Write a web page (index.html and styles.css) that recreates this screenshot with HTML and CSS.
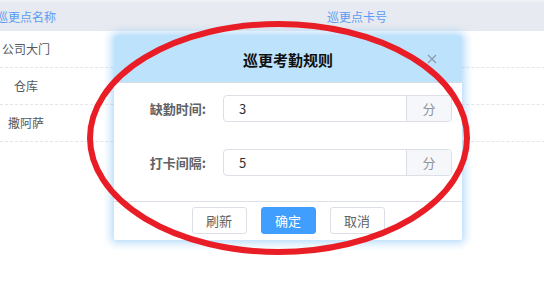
FILE: index.html
```html
<!DOCTYPE html>
<html lang="zh">
<head>
<meta charset="utf-8">
<link rel="stylesheet" href="styles.css">
</head>
<body>
<div class="page">
  <div class="table">
    <div class="thead">
      <div class="cell c1">巡更点名称</div>
      <div class="cell c2">巡更点卡号</div>
    </div>
    <div class="row"><div class="cell c1">公司大门</div><div class="cell c2"></div></div>
    <div class="row"><div class="cell c1">仓库</div><div class="cell c2"></div></div>
    <div class="row"><div class="cell c1">撒阿萨</div><div class="cell c2"></div></div>
  </div>

  <div class="dialog">
    <div class="dlg-head">
      <span class="dlg-title">巡更考勤规则</span>
      <svg class="dlg-close" width="10" height="10" viewBox="0 0 10 10"><path d="M1 1L9 9M9 1L1 9" stroke="#8c9aa8" stroke-width="1.2" fill="none"/></svg>
    </div>
    <div class="dlg-body">
      <div class="form-row">
        <label class="label">缺勤时间:</label>
        <div class="input-group">
          <div class="input">3</div>
          <div class="append">分</div>
        </div>
      </div>
      <div class="form-row">
        <label class="label">打卡间隔:</label>
        <div class="input-group">
          <div class="input">5</div>
          <div class="append">分</div>
        </div>
      </div>
    </div>
    <div class="dlg-foot">
      <button class="btn">刷新</button>
      <button class="btn primary">确定</button>
      <button class="btn">取消</button>
    </div>
  </div>

  <svg class="annot" width="544" height="307" viewBox="0 0 544 307">
    <ellipse cx="278.5" cy="138" rx="188.5" ry="114" fill="none" stroke="#e81d25" stroke-width="6"/>
  </svg>
</div>
</body>
</html>
```
FILE: styles.css
```css
html, body {
  margin: 0;
  padding: 0;
  background: #fff;
}
body {
  font-family: "Noto Sans CJK SC", "Noto Sans", sans-serif;
  width: 544px;
  height: 307px;
  overflow: hidden;
}
.page {
  position: relative;
  width: 544px;
  height: 307px;
  overflow: hidden;
}
.table {
  width: 700px;
}
.thead, .row {
  display: grid;
  grid-template-columns: 52px 610px;
}
.thead {
  height: 31px;
  background: #e7eaf0;
  border-top: 2px solid #eef0f4;
  box-sizing: border-box;
  color: #5a9cf4;
}
.row {
  height: 37px;
  box-sizing: border-box;
  border-bottom: 1px dashed #e3e5e8;
  color: #555a60;
}
.cell {
  display: flex;
  align-items: center;
  justify-content: center;
  font-size: 12px;
  white-space: nowrap;
  overflow: visible;
}
.row .cell {
  padding-bottom: 2px;
}
.dialog {
  position: absolute;
  left: 114px;
  top: 35px;
  width: 348px;
  height: 205px;
  background: #fff;
  border-radius: 4px 4px 2px 2px;
  box-shadow: 0 0 9px 3px rgba(120, 190, 248, 0.55);
  display: flex;
  flex-direction: column;
}
.dlg-head {
  position: relative;
  height: 47px;
  background: #bde2fb;
  border-radius: 4px 4px 0 0;
  border-bottom: 1px solid #d9dde3;
  display: flex;
  align-items: center;
  justify-content: center;
}
.dlg-title {
  font-size: 15px;
  font-weight: bold;
  color: #111;
  padding-top: 1px;
}
.dlg-close {
  position: absolute;
  right: 25px;
  top: 19px;
}
.dlg-body {
  padding: 12px 10px 0 0;
  height: 106px;
  box-sizing: border-box;
  display: flex;
  flex-direction: column;
  gap: 27px;
}
.form-row {
  display: flex;
  align-items: center;
  height: 27px;
}
.label {
  width: 92px;
  margin-right: 17px;
  text-align: right;
  font-size: 13px;
  font-weight: bold;
  color: #606266;
}
.input-group {
  flex: 1;
  display: flex;
  height: 27px;
  box-sizing: border-box;
  border: 1px solid #dcdfe6;
  border-radius: 4px;
  overflow: hidden;
}
.input {
  flex: 1;
  display: flex;
  align-items: center;
  padding-left: 15px;
  font-size: 13px;
  color: #303133;
}
.append {
  width: 44px;
  background: #f5f7fa;
  border-left: 1px solid #dcdfe6;
  display: flex;
  align-items: center;
  justify-content: center;
  font-size: 13px;
  color: #909399;
}
.dlg-foot {
  margin-top: 12px;
  border-top: 1px solid #dcdfe6;
  padding-top: 5px;
  display: flex;
  justify-content: center;
  gap: 14px;
}
.btn {
  width: 55px;
  height: 27px;
  padding: 0;
  border: 1px solid #dcdfe6;
  border-radius: 3px;
  background: #fff;
  font-family: "Noto Sans CJK SC", sans-serif;
  font-size: 13px;
  color: #606266;
}
.btn.primary {
  background: #409eff;
  border-color: #409eff;
  color: #fff;
}
.annot {
  position: absolute;
  left: 0;
  top: 0;
  pointer-events: none;
}
```
